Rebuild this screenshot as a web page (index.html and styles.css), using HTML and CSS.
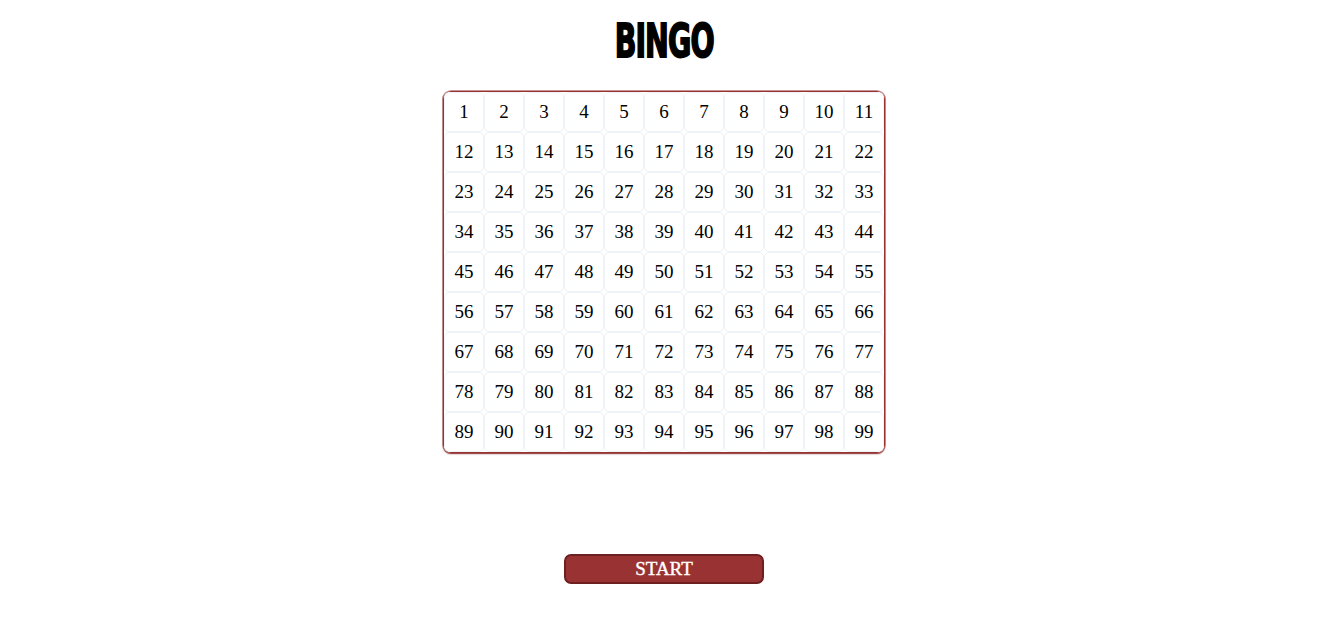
FILE: index.html
```html
<!DOCTYPE html>
<html>
<head>
<meta charset="utf-8">
<link rel="stylesheet" href="styles.css">
</head>
<body>
<main class="page">
  <h1 class="title">BINGO</h1>
  <div class="board" id="board"></div>
  <button class="start">START</button>
</main>
<script src="script.js"></script>
</body>
</html>
```
FILE: styles.css
```css
html, body {
  margin: 0;
  padding: 0;
  background: #ffffff;
}
.page {
  display: flex;
  flex-direction: column;
  align-items: center;
  padding-top: 21px;
  padding-right: 2px;
  font-family: "Liberation Serif", "Times New Roman", serif;
}
.title {
  margin: 0;
  height: 40px;
  font-family: "DejaVu Sans Condensed", "DejaVu Sans", sans-serif;
  font-stretch: condensed;
  font-weight: bold;
  font-size: 34px;
  line-height: 40px;
  letter-spacing: -1px;
  color: #000;
  -webkit-text-stroke: 1.3px #000;
  transform: scale(0.93, 1.36);
}
.board {
  margin-top: 30px;
  display: grid;
  grid-template-columns: repeat(11, 40px);
  grid-auto-rows: 40px;
  border: 1px solid #993333;
  border-radius: 8px;
  box-shadow: 0 0 0 0.7px rgba(153, 51, 51, 0.7), 0 1px 1.5px rgba(120, 30, 30, 0.85);
  padding: 0;
}
.cell {
  display: flex;
  align-items: center;
  justify-content: center;
  border: 1px solid #eef3f8;
  border-radius: 5px;
  font-size: 19px;
  color: #000;
}
.start {
  margin-top: 101px;
  width: 200px;
  height: 30px;
  background: #993333;
  border: 2px solid #6e2020;
  border-radius: 7px;
  color: #ffffff;
  font-family: "Liberation Serif", "Times New Roman", serif;
  font-size: 19px;
  -webkit-text-stroke: 0.4px #ffffff;
  padding: 0;
  line-height: 24px;
}
```
FILE: script.js
```js
var board = document.getElementById('board');
for (var i = 1; i <= 99; i++) {
  var c = document.createElement('div');
  c.className = 'cell';
  c.textContent = i;
  board.appendChild(c);
}
```
